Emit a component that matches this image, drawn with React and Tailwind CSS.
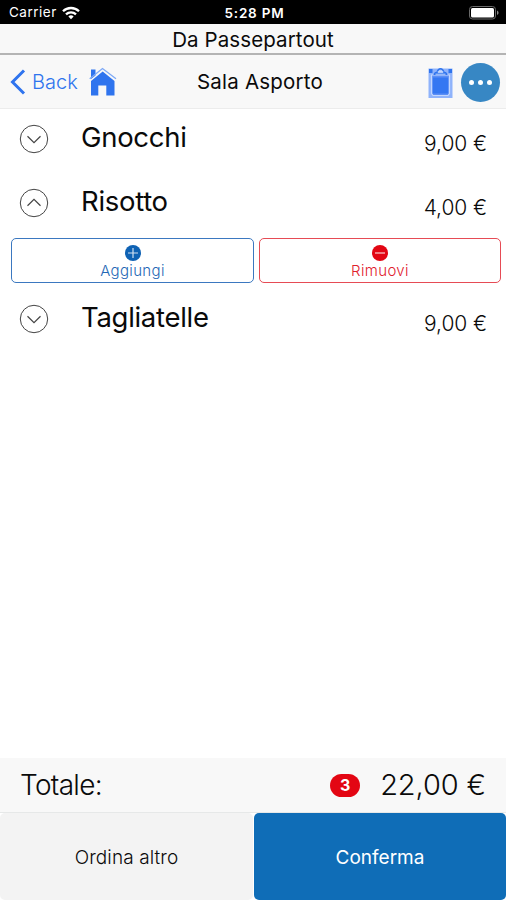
import React, { useState } from "react";

const formatPrice = (value) => value.toFixed(2).replace(".", ",") + " €";

const WifiIcon = () => (
    <svg width="18" height="14" viewBox="0 0 18 14" fill="none" stroke="#fff" strokeWidth="2.3">
        <path d="M1 5.2C5.4.9 12.6.9 17 5.2" />
        <path d="M4 8.3c2.8-2.7 7.2-2.7 10 0" />
        <path d="M6.4 10.4c1.5-1.4 3.7-1.4 5.2 0L9 13.2z" fill="#fff" stroke="none" />
    </svg>
);

const BatteryIcon = () => (
    <svg width="31" height="14" viewBox="0 0 31 14">
        <rect x="0.5" y="0.5" width="26" height="12.5" rx="3" fill="none" stroke="#6a6a6a" />
        <rect x="2" y="2" width="23" height="9.5" rx="1.5" fill="#fff" />
        <path d="M28 4.5c2 .8 2 3.7 0 4.5z" fill="#8a8a8a" />
    </svg>
);

const HomeIcon = () => (
    <svg width="28" height="29" viewBox="0 0 28 29">
        <path d="M2 2.500h4.500v6L2 12z" fill="#2f74ee" />
        <path d="M.7 11.800L13.500 1.500 27 11.800" fill="none" stroke="#7ea9f6" strokeWidth="1.300" />
        <path d="M13.700 4.500L2 14v14.500h7.300v-10h8v10h8.200V14z" fill="#2f74ee" />
    </svg>
);

const ClipboardIcon = () => (
    <svg width="25" height="31" viewBox="0 0 25 31">
        <rect x="0.500" y="1.500" width="24" height="29.500" fill="#8fb3fb" />
        <path d="M1 2h3.500v4H1zM20.500 2H24v4h-3.500z" fill="#2f74ee" />
        <path d="M3.500 8h18v18.500L20 28.500H5l-1.500-2z" fill="#5b8ff6" stroke="#c3d7fe" strokeWidth="1.200" />
        <rect x="5" y="10.500" width="15" height="16" fill="#3477f2" />
        <path d="M5.500 8c0-2 1.200-3 3-3.300C9.500-.4 15.500-.4 16.500 4.700c1.800.3 3 1.300 3 3.300z" fill="#2f74ee" />
        <path d="M7.500 7.200h10M10 5.300c.5-2.800 4.500-2.800 5 0z" fill="#c3d7fe" stroke="#c3d7fe" strokeWidth="1" />
    </svg>
);

const ToggleIcon = ({ open }) => (
    <svg width="30" height="30" viewBox="0 0 30 30" fill="none" stroke="#444">
        <circle cx="15" cy="15" r="13.700" strokeWidth="1" />
        <path d={open ? "M8.500 17.700L15 11.300l6.500 6.400" : "M8.500 12.300L15 18.700l6.500-6.400"} strokeWidth="1.200" />
    </svg>
);

const SignIcon = ({ plus }) => (
    <svg width="16" height="16" viewBox="0 0 16 16">
        <circle cx="8" cy="8" r="8" fill={plus ? "#0f62b4" : "#e20613"} />
        <path d={plus ? "M3 8h10M8 3v10" : "M3 8h10"} stroke="#fff" strokeOpacity="0.8" strokeWidth="1.200" />
    </svg>
);

const DishRow = ({ dish, open, onToggle }) => (
    <div>
        <div className="flex h-16 items-start pl-[19px] pr-[19px]">
            <button className="mt-[15px]" onClick={onToggle}>
                <ToggleIcon open={open} />
            </button>
            <span className="ml-8 mt-[11px] text-[27.5px] leading-[34px] tracking-[-0.3px]">{dish.name}</span>
            <span className="ml-auto mt-[22px] text-[21px] font-light leading-[26px] tracking-[-0.1px]">{formatPrice(dish.price)}</span>
        </div>
        {open && (
            <div className="flex h-[52px] gap-[5px] pl-[11px] pr-[5px] pt-px">
                <button className="flex h-[45px] w-[243px] flex-col items-center rounded-[5px] border border-[#3b78c0] pt-[6px] text-[#2467b5]">
                    <SignIcon plus />
                    <span className="mt-px text-[15px] font-light leading-[18px] tracking-[0.35px]">Aggiungi</span>
                </button>
                <button className="flex h-[45px] flex-1 flex-col items-center rounded-[5px] border border-[#e64b55] pt-[6px] text-[#df202c]">
                    <SignIcon />
                    <span className="mt-px text-[15px] font-light leading-[18px] tracking-[0.35px]">Rimuovi</span>
                </button>
            </div>
        )}
    </div>
);

const App = () => {
    const [openId, setOpenId] = useState(2);

    const dishes = [
        { id: 1, name: "Gnocchi", price: 9 },
        { id: 2, name: "Risotto", price: 4 },
        { id: 3, name: "Tagliatelle", price: 9 },
    ];

    const total = dishes.reduce((sum, d) => sum + d.price, 0);

    return (
        <div className="flex h-[900px] w-[506px] flex-col overflow-hidden bg-white font-['Inter',sans-serif] text-[#0a0a0a]">
            <div className="grid h-6 shrink-0 grid-cols-3 items-center bg-black pl-[9px] pr-[6px] text-[13.5px] leading-none text-white">
                <div className="flex items-center gap-[5px] pt-[2px]">
                    <span className="tracking-[0.5px]">Carrier</span>
                    <WifiIcon />
                </div>
                <span className="pt-[3px] text-center font-semibold tracking-[0.8px]">5:28 PM</span>
                <div className="flex justify-end pt-[2px]">
                    <BatteryIcon />
                </div>
            </div>

            <div className="h-[31px] shrink-0 border-b-2 border-[#b4b4b4] bg-[#f8f8f8] pt-px text-center text-[20.5px] leading-[30px] tracking-[0.1px]">
                Da Passepartout
            </div>

            <header className="grid h-[54px] shrink-0 grid-cols-[168px_1fr_168px] items-center border-b border-[#ececec] bg-[#f8f8f8] pl-[10px] pr-[6px]">
                <div className="flex items-center text-[#2f74ee]">
                    <svg width="16" height="26" viewBox="0 0 16 26" fill="none" stroke="currentColor" strokeWidth="3">
                        <path d="M14 1.500L2.500 13 14 24.500" />
                    </svg>
                    <span className="ml-[6px] text-[20px] font-light">Back</span>
                    <span className="ml-[11px]">
                        <HomeIcon />
                    </span>
                </div>
                <h1 className="pl-[10px] pt-px text-center text-[20.5px] tracking-[0.2px]">Sala Asporto</h1>
                <div className="flex items-center justify-end gap-2 pt-px">
                    <ClipboardIcon />
                    <div className="flex size-[39px] items-center justify-center gap-1 rounded-full bg-[#3787c4]">
                        <span className="size-[5px] rounded-full bg-white" />
                        <span className="size-[5px] rounded-full bg-white" />
                        <span className="size-[5px] rounded-full bg-white" />
                    </div>
                </div>
            </header>

            <main className="flex-1">
                {dishes.map((dish) => (
                    <DishRow
                        key={dish.id}
                        dish={dish}
                        open={dish.id === openId}
                        onToggle={() => setOpenId(dish.id === openId ? null : dish.id)}
                    />
                ))}
            </main>

            <footer className="shrink-0">
                <div className="flex h-[54px] items-center bg-[#f8f8f8] pl-5 pr-5">
                    <span className="text-[28px] font-light tracking-[-0.7px]">Totale:</span>
                    <span className="ml-auto flex h-[23px] w-[30px] items-center justify-center rounded-full bg-[#e30613] text-base font-bold text-white">
                        {dishes.length}
                    </span>
                    <span className="ml-5 text-[29px] font-light tracking-[-0.1px]">{formatPrice(total)}</span>
                </div>
                <div className="flex h-[88px] gap-px border-t border-[#e6e8e8] text-[19px]">
                    <button className="w-[253px] rounded-[5px] bg-[#f3f3f3] pt-[3px] font-light tracking-[0.1px]">Ordina altro</button>
                    <button className="flex-1 rounded-[5px] bg-[#0f6db7] pt-[3px] text-white">Conferma</button>
                </div>
            </footer>
        </div>
    );
};

export default App;
